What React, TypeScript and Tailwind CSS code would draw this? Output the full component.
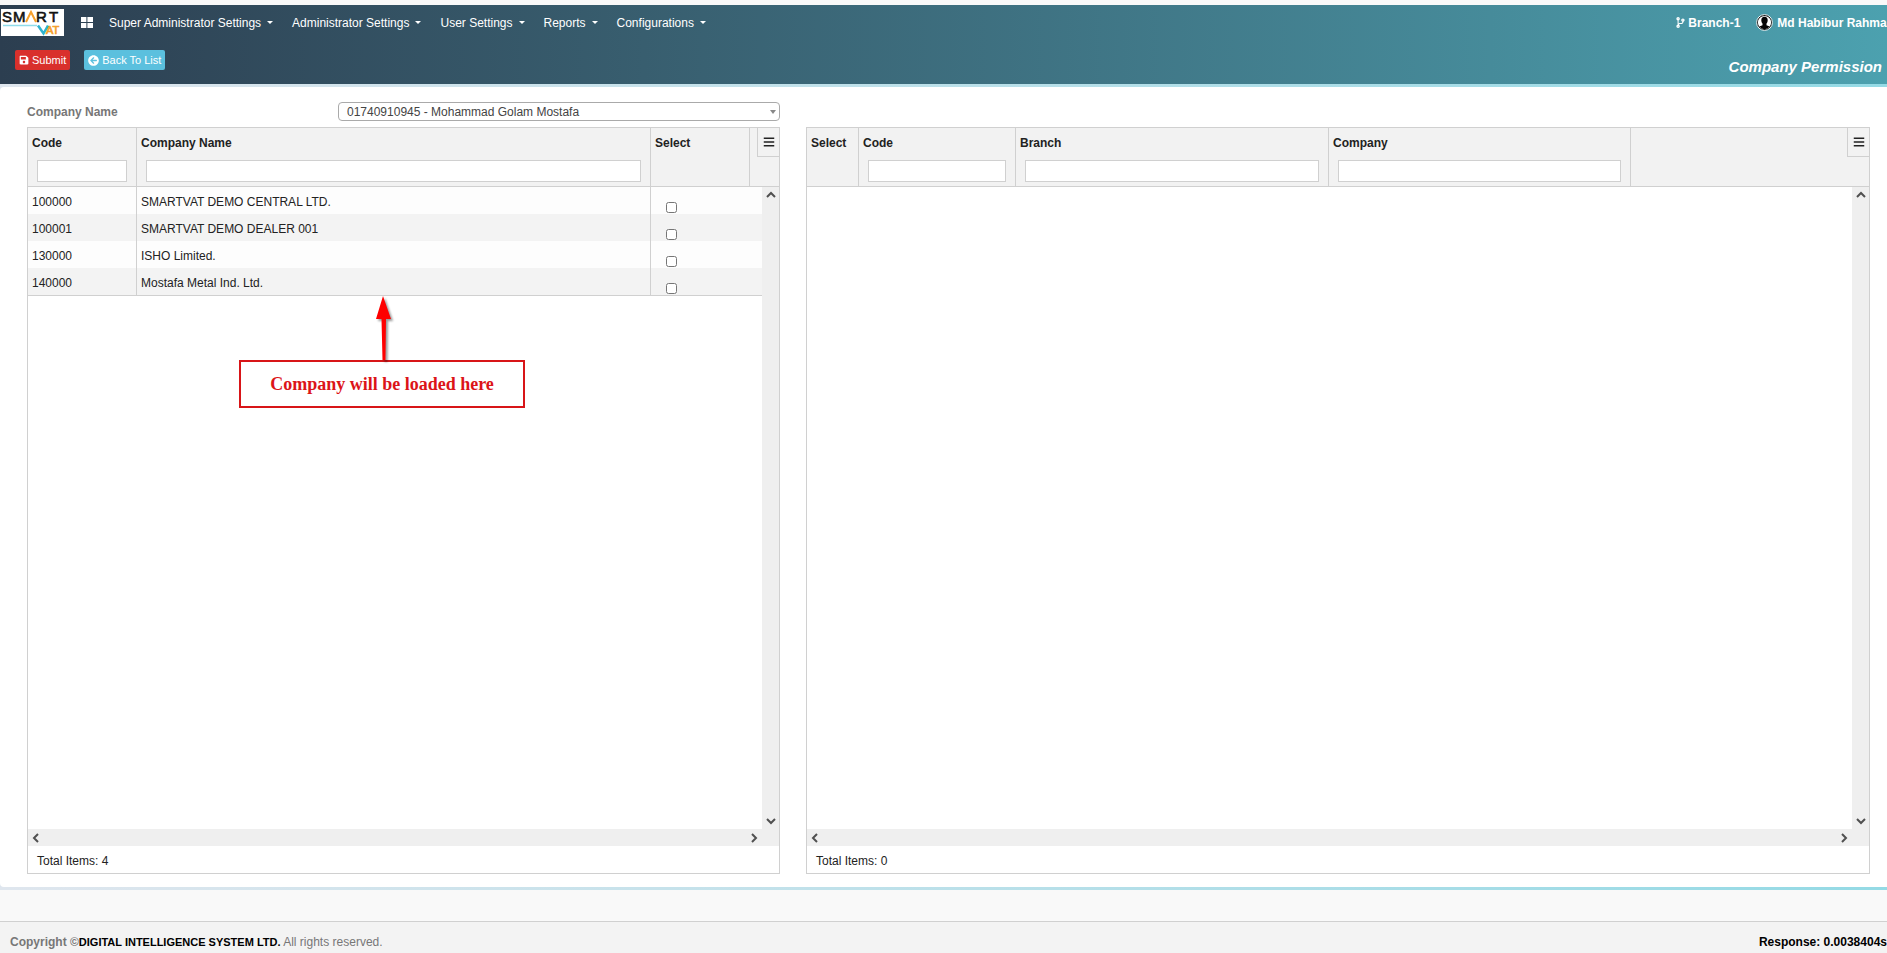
import type { ReactNode } from 'react';
import { FaArrowCircleLeft, FaBars, FaCodeBranch, FaSave } from 'react-icons/fa';

type Column = {
  name: string;
  width: string;
  filter?: boolean;
};

const menus = [
  'Super Administrator Settings',
  'Administrator Settings',
  'User Settings',
  'Reports',
  'Configurations',
];

const companyColumns: Column[] = [
  { name: 'Code', width: 'w-[109px]', filter: true },
  { name: 'Company Name', width: '', filter: true },
  { name: 'Select', width: 'w-[99px]' },
  { name: '', width: 'w-[29px]' },
];

const branchColumns: Column[] = [
  { name: 'Select', width: 'w-[52px]' },
  { name: 'Code', width: 'w-[157px]', filter: true },
  { name: 'Branch', width: 'w-[313px]', filter: true },
  { name: 'Company', width: 'w-[302px]', filter: true },
  { name: '', width: '' },
];

const companies = [
  { code: '100000', name: 'SMARTVAT DEMO CENTRAL LTD.' },
  { code: '100001', name: 'SMARTVAT DEMO DEALER 001' },
  { code: '130000', name: 'ISHO Limited.' },
  { code: '140000', name: 'Mostafa Metal Ind. Ltd.' },
];

function Logo() {
  return (
    <svg width="63" height="27" viewBox="0 0 63 27" role="img" aria-label="Smart VAT">
      <rect width="63" height="27" fill="#fff" />
      <g fontFamily="Liberation Sans, sans-serif" fontSize="15" stroke="#111" strokeWidth="0.6" fill="#111">
        <text x="1" y="13">S</text>
        <text x="12" y="13">M</text>
        <text x="35" y="13">R</text>
        <text x="48" y="13">T</text>
      </g>
      <path d="M25 13 30 3 35 13" fill="none" stroke="#f5a02c" strokeWidth="2" />
      <path d="M2 16.5H36" stroke="#8fdcea" strokeWidth="1.5" />
      <path d="M37 16.5 42.5 24.5 47 16.5" fill="none" stroke="#2fb3cf" strokeWidth="2.5" />
      <text
        x="45"
        y="25"
        fontFamily="Liberation Sans, sans-serif"
        fontSize="11"
        stroke="#f5a02c"
        strokeWidth="0.7"
        fill="#f5a02c"
      >
        AT
      </text>
    </svg>
  );
}

function GridIcon() {
  return (
    <svg width="12" height="11" viewBox="0 0 12 11" fill="#fff">
      <path d="M0 0h5.4v5H0zM6.4 0H12v5H6.4zM0 6h5.4v5H0zM6.4 6H12v5H6.4z" />
    </svg>
  );
}

function Avatar() {
  return (
    <svg width="17" height="17" viewBox="0 0 17 17">
      <circle cx="8.5" cy="8.5" r="7.9" fill="#111" stroke="#e8f4f6" strokeWidth="1" />
      <circle cx="8.5" cy="8.5" r="6.6" fill="#fff" />
      <path d="M8.5 2.8c2.2 0 3.2 1.5 3.2 3.5 0 1.6-.6 2.6-1.2 3.3v1.6l3.2 1.4a6.6 6.6 0 0 1-10.4 0l3.2-1.4V9.6c-.6-.7-1.2-1.7-1.2-3.3 0-2 1-3.5 3.2-3.5z" fill="#050505" />
    </svg>
  );
}

function Chevron({ d }: { d: string }) {
  return (
    <svg width="10" height="10" viewBox="0 0 10 10" fill="none" stroke="#505050" strokeWidth="2">
      <path d={d} />
    </svg>
  );
}

function HeaderRow({ columns, id }: { columns: Column[]; id: string }) {
  return (
    <div className="relative border-b border-[#d0d0d0] bg-[#f2f2f2]">
      <table className="w-full table-fixed border-separate border-spacing-0">
        <thead>
          <tr>
            {columns.map((col, i) => (
              <th
                key={i}
                className={`h-[58px] border-r border-[#d0d0d0] p-0 text-left align-top font-bold last:border-r-0 ${col.width}`}
              >
                <div className="mb-[2px] h-[30px] pl-1 leading-[30px]">{col.name}</div>
                {col.filter && (
                  <div className="px-[9px]">
                    <input
                      type="text"
                      id={`${id}-${col.name}`}
                      aria-label={`Filter ${col.name}`}
                      className="block h-[22px] w-full border border-[#d0d0d0] bg-white px-1 font-normal outline-none"
                    />
                  </div>
                )}
              </th>
            ))}
          </tr>
        </thead>
      </table>
      <button
        type="button"
        aria-label="Grid menu"
        className="absolute top-0 right-0 flex h-[29px] w-[22px] items-center justify-center border-b border-l border-[#d0d0d0]"
      >
        <FaBars className="size-3" />
      </button>
    </div>
  );
}

function DataGrid({
  columns,
  total,
  id,
  children,
}: {
  columns: Column[];
  total: number;
  id: string;
  children?: ReactNode;
}) {
  return (
    <section className="flex flex-col border border-[#d0d0d0] bg-white text-[#222]">
      <HeaderRow columns={columns} id={id} />

      {/* Viewport and vertical scroll track */}
      <div className="flex flex-1">
        <div className="relative min-w-0 flex-1">{children}</div>
        <div className="flex w-[17px] flex-col items-center justify-between bg-[#efefef] py-[3px]">
          <Chevron d="M1 7l4-4 4 4" />
          <Chevron d="M1 3l4 4 4-4" />
        </div>
      </div>

      {/* Horizontal scroll track */}
      <div className="flex h-[17px] items-center justify-between bg-[#efefef] pr-5 pl-[3px]">
        <Chevron d="M7 1L3 5l4 4" />
        <Chevron d="M3 1l4 4-4 4" />
      </div>

      <div className="h-[27px] pl-[9px] leading-[31px]">Total Items: {total}</div>
    </section>
  );
}

function CompanyRows() {
  return (
    <table className="w-full table-fixed border-separate border-spacing-0 border-b border-[#d0d0d0]">
      <tbody>
        {companies.map((company) => (
          <tr key={company.code} className="h-[27px] odd:bg-[#fdfdfd] even:bg-[#f3f3f3]">
            <td className="w-[109px] border-r border-[#d0d0d0] p-0 pt-[2px] pl-1">{company.code}</td>
            <td className="border-r border-[#d0d0d0] p-0 pt-[2px] pl-1">{company.name}</td>
            <td className="w-[111px] p-0 pb-px pl-[15px] align-bottom">
              <input type="checkbox" aria-label={`Select ${company.name}`} className="block size-[11px]" />
            </td>
          </tr>
        ))}
      </tbody>
    </table>
  );
}

function Callout() {
  return (
    <div className="absolute top-[109px] left-[211px] flex w-[286px] flex-col">
      <svg width="24" height="64" viewBox="0 0 24 64" className="ml-[133px] overflow-visible drop-shadow-[2px_2px_1px_rgba(0,0,0,0.4)]">
        <path d="M11 0L19 23H14L13.5 64H10.5L9.5 23H4z" fill="#fe0000" />
      </svg>
      <div className="border-2 border-[#d81518] bg-white text-center font-['Liberation_Serif',serif] text-[18px] leading-[44px] font-bold text-[#dc1418]">
        Company will be loaded here
      </div>
    </div>
  );
}

export default function App() {
  return (
    <div className="flex min-h-screen flex-col overflow-hidden bg-[#f9f9f9] font-['Liberation_Sans',Arial,sans-serif] text-[12px] leading-4 whitespace-nowrap">
      <header className="mt-[5px] h-[79px] bg-linear-to-r from-[#2c3e50] to-[#4ca1af] text-white">
        <nav className="flex h-[35px] items-center justify-between pl-px">
          <div className="flex items-center">
            <Logo />
            <a href="#" aria-label="Dashboard" className="ml-[17px]">
              <GridIcon />
            </a>
            <div className="ml-4 flex gap-[19px]">
              {menus.map((menu) => (
                <button key={menu} type="button" className="flex items-center gap-[6px]">
                  {menu}
                  <span className="border-x-3 border-t-3 border-x-transparent border-t-white" />
                </button>
              ))}
            </div>
          </div>
          <div className="-mr-[7px] flex items-center font-bold">
            <a href="#" className="mr-4 flex items-center gap-[2px]">
              <FaCodeBranch className="size-[11px]" />
              Branch-1
            </a>
            <a href="#" className="flex items-center gap-1">
              <Avatar />
              Md Habibur Rahman
            </a>
          </div>
        </nav>

        <div className="flex items-start justify-between pt-[10px] pr-[5px] pl-[15px] text-[11px]">
          <div className="flex gap-[14px]">
            <button type="button" className="flex h-5 items-center gap-[3px] rounded-[2px] bg-[#d9302c] px-1">
              <FaSave className="size-[10px]" />
              Submit
            </button>
            <button type="button" className="flex h-5 items-center gap-[3px] rounded-[2px] bg-[#5bc0de] px-1">
              <FaArrowCircleLeft className="size-[11px]" />
              Back To List
            </button>
          </div>
          <h1 className="pt-2 text-[15px] leading-[18px] font-bold italic">Company Permission</h1>
        </div>
      </header>

      {/* Tinted rules above and below the white panel */}
      <div className="flex flex-1 flex-col bg-linear-to-r from-[#dfe6ee] to-[#94dae5] py-[3px]">
        <main className="flex flex-1 flex-col rounded-l bg-white pt-[15px] pr-[17px] pb-[13px] pl-[27px]">
          <div className="grid grid-cols-[753fr_1064fr] gap-x-[26px]">
            <div className="flex items-center">
              <label htmlFor="company" className="w-[311px] font-bold text-[#777]">
                Company Name
              </label>
              <div className="relative flex-1">
                <select
                  id="company"
                  className="block h-[19px] w-full appearance-none rounded border border-[#aaa] bg-white pt-px pl-2 leading-4 text-[#444]"
                >
                  <option>01740910945 - Mohammad Golam Mostafa</option>
                </select>
                <span className="pointer-events-none absolute top-2 right-1 border-x-3 border-t-4 border-x-transparent border-t-[#888]" />
              </div>
            </div>
          </div>

          <div className="mt-[6px] grid flex-1 grid-cols-[753fr_1064fr] gap-x-[26px]">
            <DataGrid columns={companyColumns} total={4} id="company-grid">
              <CompanyRows />
              <Callout />
            </DataGrid>
            <DataGrid columns={branchColumns} total={0} id="branch-grid" />
          </div>
        </main>
      </div>

      <footer className="mt-[31px] flex h-8 justify-between border-t border-[#d0d0d0] bg-[#f3f3f3] pt-3 pl-[10px] text-[#777]">
        <p>
          <b>Copyright ©</b>
          <b className="text-[11px] text-black">DIGITAL INTELLIGENCE SYSTEM LTD.</b> All rights reserved.
        </p>
        <b className="text-black">Response: 0.0038404s</b>
      </footer>
    </div>
  );
}
